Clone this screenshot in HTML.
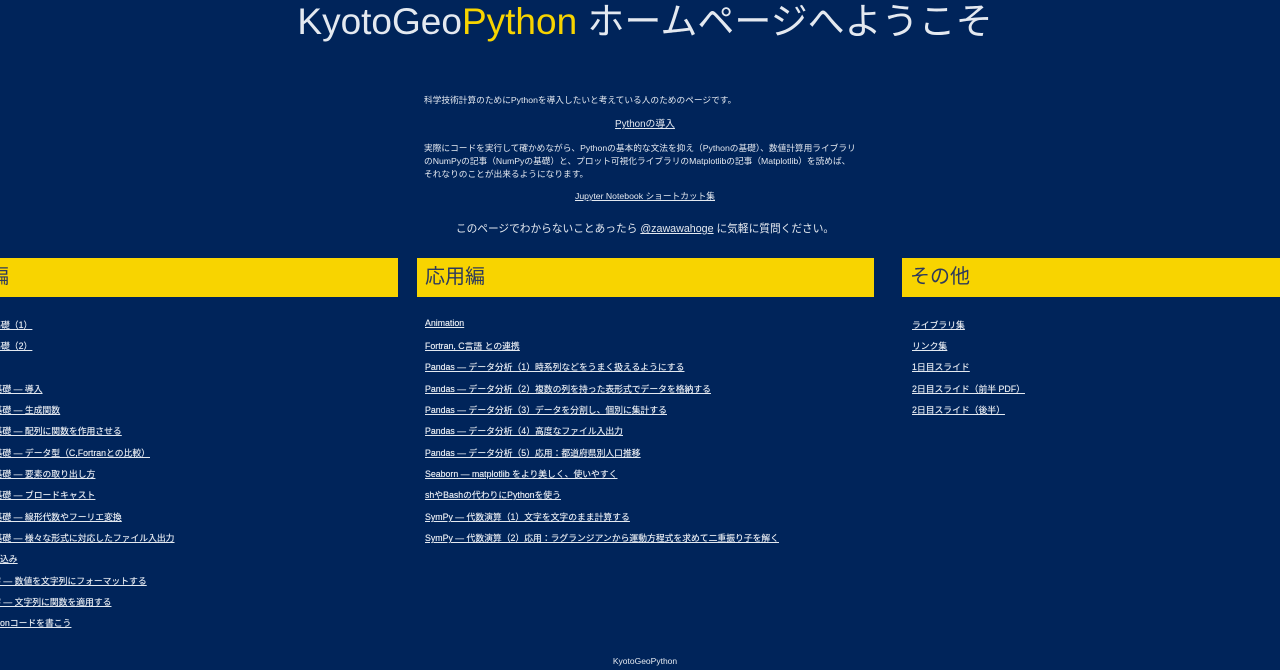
<!DOCTYPE html>
<html><head><meta charset="utf-8"><style>
body{margin:0;width:1280px;height:670px;overflow:hidden;background:#00245a;color:#e4e9f0;font-family:"Liberation Sans","Noto Sans CJK JP",sans-serif;position:relative}
.a{position:absolute;white-space:nowrap}
h1{position:absolute;left:0;width:1290px;top:0;margin:0;text-align:center;font-weight:normal;font-size:37px;line-height:44px;color:#e4e9f0}
h1 span{color:#f8d400}
.s{font-size:8.7px;line-height:13px}
u{text-decoration:underline}
.hd{position:absolute;top:258px;height:39px;background:#f8d400;color:#2d3a5c;font-size:20px;line-height:39px;padding-left:8px;box-sizing:border-box}
.li{position:absolute;font-size:8.8px;white-space:nowrap;text-decoration:underline;color:#e4e9f0;text-shadow:0 0 0.4px #e4e9f0}
</style></head><body>
<h1>KyotoGeo<span>Python</span> ホームページへようこそ</h1>
<div class="a s" style="left:424px;top:94px">科学技術計算のためにPythonを導入したいと考えている人のためのページです。</div>
<div class="a s" style="left:0;width:1290px;text-align:center;top:118px;font-size:9.8px"><u>Pythonの導入</u></div>
<div class="a s" style="left:424px;top:142px">実際にコードを実行して確かめながら、Pythonの基本的な文法を抑え（Pythonの基礎）、数値計算用ライブラリ<br>のNumPyの記事（NumPyの基礎）と、プロット可視化ライブラリのMatplotlibの記事（Matplotlib）を読めば、<br>それなりのことが出来るようになります。</div>
<div class="a s" style="left:0;width:1290px;text-align:center;top:190px"><u>Jupyter Notebook ショートカット集</u></div>
<div class="a" style="left:0;width:1290px;text-align:center;top:221px;font-size:10.7px">このページでわからないことあったら <u>@zawawahoge</u> に気軽に質問ください。</div>

<div class="hd" style="left:-59px;width:457px">基礎編</div>
<div class="hd" style="left:417px;width:457px">応用編</div>
<div class="hd" style="left:902px;width:400px">その他</div>

<div class="li" style="left:-44px;top:318px">Pythonの基礎（1）</div>
<div class="li" style="left:-44px;top:339px">Pythonの基礎（2）</div>
<div class="li" style="left:-44px;top:382px">NumPyの基礎 — 導入</div>
<div class="li" style="left:-44px;top:403px">NumPyの基礎 — 生成関数</div>
<div class="li" style="left:-44px;top:424px">NumPyの基礎 — 配列に関数を作用させる</div>
<div class="li" style="left:-44px;top:446px">NumPyの基礎 — データ型（C,Fortranとの比較）</div>
<div class="li" style="left:-44px;top:467px">NumPyの基礎 — 要素の取り出し方</div>
<div class="li" style="left:-44px;top:488px">NumPyの基礎 — ブロードキャスト</div>
<div class="li" style="left:-44px;top:510px">NumPyの基礎 — 線形代数やフーリエ変換</div>
<div class="li" style="left:-44px;top:531px">NumPyの基礎 — 様々な形式に対応したファイル入出力</div>
<div class="li" style="left:-44px;top:552px">リスト内包込み</div>
<div class="li" style="left:-44px;top:574px">Python文字 — 数値を文字列にフォーマットする</div>
<div class="li" style="left:-44px;top:595px">Python文字 — 文字列に関数を適用する</div>
<div class="li" style="left:-44px;top:616px">美しいPythonコードを書こう</div>

<div class="li" style="left:425px;top:318px">Animation</div>
<div class="li" style="left:425px;top:339px">Fortran, C言語 との連携</div>
<div class="li" style="left:425px;top:360px">Pandas — データ分析（1）時系列などをうまく扱えるようにする</div>
<div class="li" style="left:425px;top:382px">Pandas — データ分析（2）複数の列を持った表形式でデータを格納する</div>
<div class="li" style="left:425px;top:403px">Pandas — データ分析（3）データを分割し、個別に集計する</div>
<div class="li" style="left:425px;top:424px">Pandas — データ分析（4）高度なファイル入出力</div>
<div class="li" style="left:425px;top:446px">Pandas — データ分析（5）応用：都道府県別人口推移</div>
<div class="li" style="left:425px;top:467px">Seaborn — matplotlib をより美しく、使いやすく</div>
<div class="li" style="left:425px;top:488px">shやBashの代わりにPythonを使う</div>
<div class="li" style="left:425px;top:510px">SymPy — 代数演算（1）文字を文字のまま計算する</div>
<div class="li" style="left:425px;top:531px">SymPy — 代数演算（2）応用：ラグランジアンから運動方程式を求めて二重振り子を解く</div>

<div class="li" style="left:912px;top:318px">ライブラリ集</div>
<div class="li" style="left:912px;top:339px">リンク集</div>
<div class="li" style="left:912px;top:360px">1日目スライド</div>
<div class="li" style="left:912px;top:382px">2日目スライド（前半 PDF）</div>
<div class="li" style="left:912px;top:403px">2日目スライド（後半）</div>

<div class="a" style="left:0;width:1290px;text-align:center;top:656px;font-size:8.5px">KyotoGeoPython</div>
</body></html>
